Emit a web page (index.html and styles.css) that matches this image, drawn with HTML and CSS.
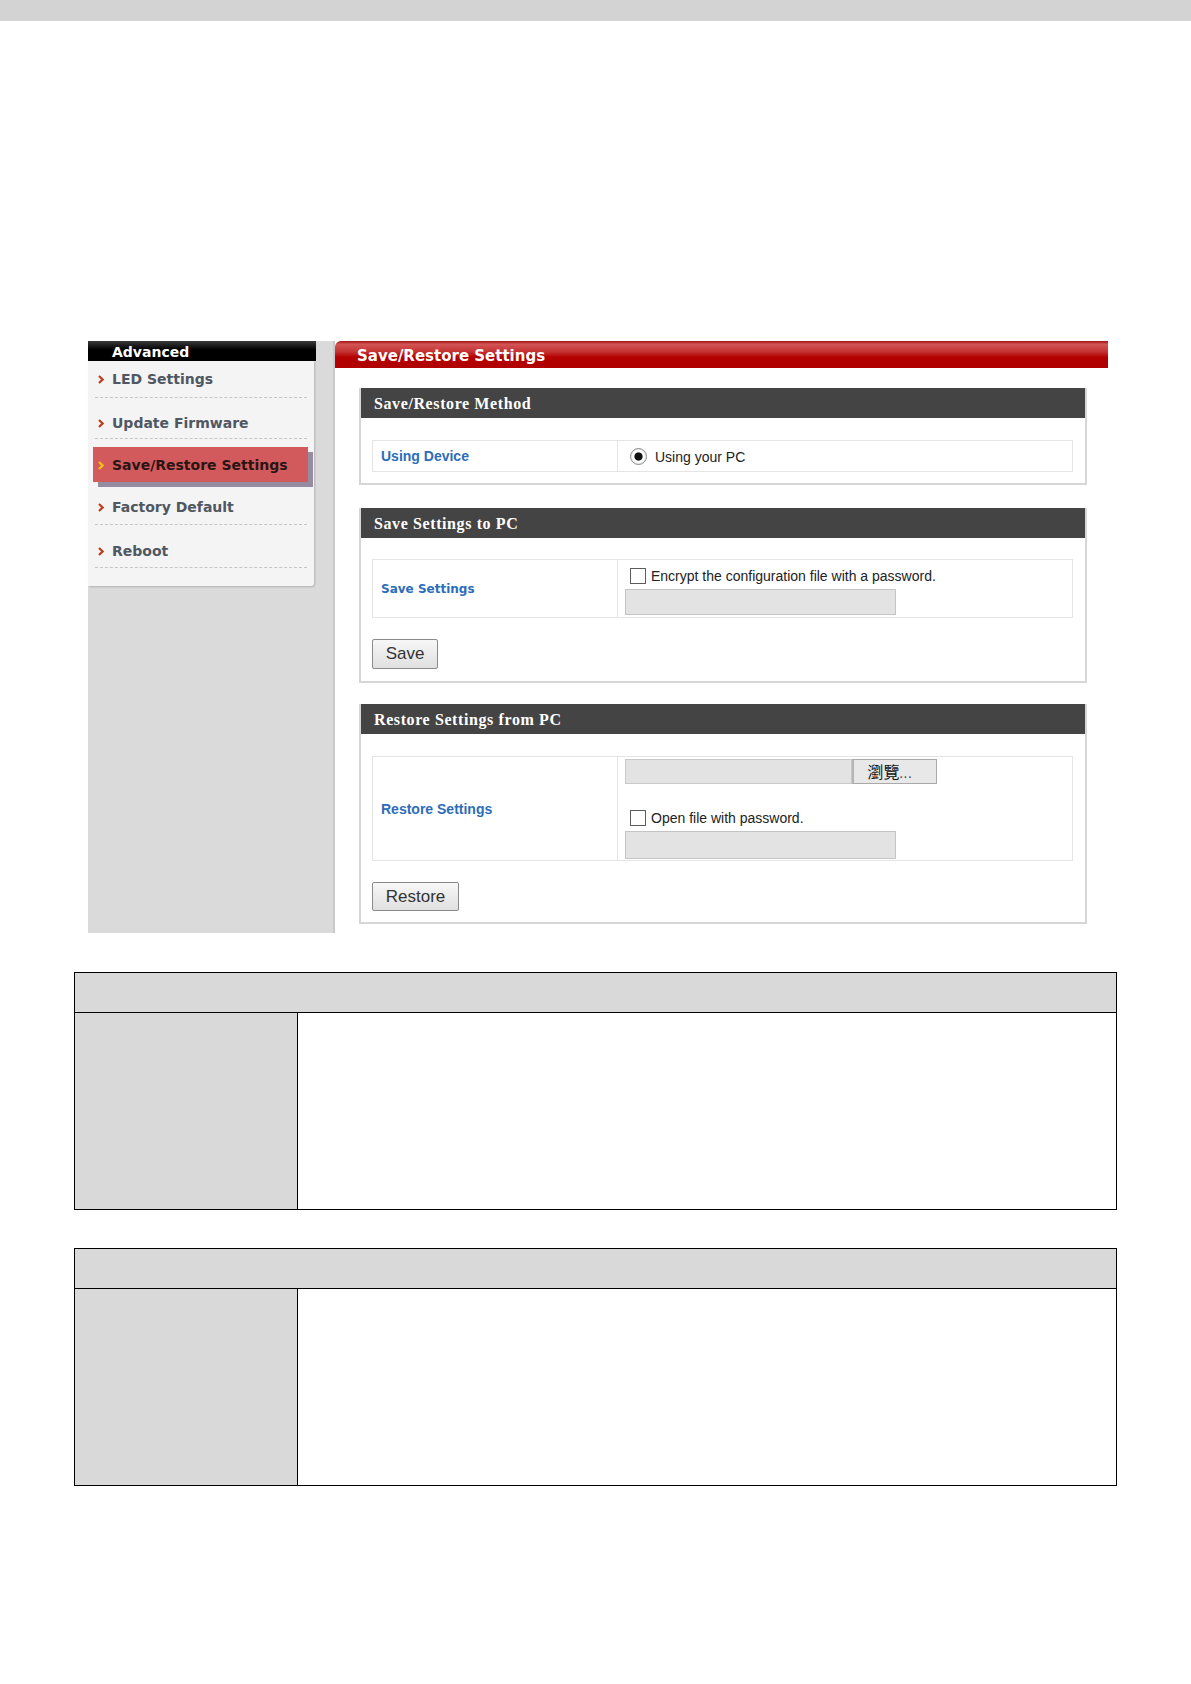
FILE: index.html
```html
<!DOCTYPE html>
<html lang="en">
  <head>
    <meta charset="UTF-8" />
    <meta name="viewport" content="width=device-width, initial-scale=1.0" />
    <link rel="stylesheet" href="styles.css">
    <title>Save/Restore Settings</title>
  </head>
  <body>
    <div class="topbar"></div>

    <div class="shot">
      <aside class="side">
        <div class="side-head">Advanced</div>
        <ul class="menu">
          <li class="item first"><svg class="arrow" viewBox="0 0 6 9"><path d="M1 1 L4.6 4.5 L1 8" /></svg>LED Settings</li>
          <li class="item second"><svg class="arrow" viewBox="0 0 6 9"><path d="M1 1 L4.6 4.5 L1 8" /></svg>Update Firmware</li>
          <li class="item active"><svg class="arrow" viewBox="0 0 6 9"><path d="M1 1 L4.6 4.5 L1 8" /></svg>Save/Restore Settings</li>
          <li class="item fourth"><svg class="arrow" viewBox="0 0 6 9"><path d="M1 1 L4.6 4.5 L1 8" /></svg>Factory Default</li>
          <li class="item last"><svg class="arrow" viewBox="0 0 6 9"><path d="M1 1 L4.6 4.5 L1 8" /></svg>Reboot</li>
        </ul>
      </aside>

      <main class="main">
        <h1 class="title">Save/Restore Settings</h1>

        <section class="box box-method">
          <h2 class="box-head">Save/Restore Method</h2>
          <table class="form">
            <tr class="row-method">
              <td class="label">Using Device</td>
              <td class="value">
                <label class="opt"><input type="radio" name="method" checked /> Using your PC</label>
              </td>
            </tr>
          </table>
        </section>

        <section class="box box-save">
          <h2 class="box-head">Save Settings to PC</h2>
          <table class="form">
            <tr class="row-save">
              <td class="label label-verdana">Save Settings</td>
              <td class="value">
                <label class="opt"><input type="checkbox" /> Encrypt the configuration file with a password.</label>
                <input class="field" type="password" title="Password" />
              </td>
            </tr>
          </table>
          <button class="btn btn-save">Save</button>
        </section>

        <section class="box box-restore">
          <h2 class="box-head">Restore Settings from PC</h2>
          <table class="form">
            <tr class="row-restore">
              <td class="label">Restore Settings</td>
              <td class="value">
                <div class="file">
                  <input class="file-name" type="text" title="File" readonly />
                  <button class="browse">瀏覽<span class="dots">...</span></button>
                </div>
                <label class="opt opt-open"><input type="checkbox" /> Open file with password.</label>
                <input class="field field-open" type="password" title="Password" />
              </td>
            </tr>
          </table>
          <button class="btn btn-restore">Restore</button>
        </section>
      </main>
    </div>

    <table class="doc doc-first">
      <tr><th colspan="2"></th></tr>
      <tr><td class="doc-key"></td><td class="doc-val"></td></tr>
    </table>

    <table class="doc doc-second">
      <tr><th colspan="2"></th></tr>
      <tr><td class="doc-key"></td><td class="doc-val"></td></tr>
    </table>
  </body>
</html>
```

FILE: styles.css
```css
* {
  margin: 0;
  padding: 0;
  box-sizing: border-box;
}

body {
  background: #fff;
  font-family: "Liberation Sans", Arial, sans-serif;
  color: #222;
}

.topbar {
  height: 21px;
  background: #d3d3d3;
}

/* SCREENSHOT */
.shot {
  display: flex;
  width: 1020px;
  margin: 320px 0 0 88px;
}

.side {
  width: 247px;
  background: #dadada;
  border-right: 2px solid #c9c9c9;
}

.side-head {
  width: 228px;
  height: 20px;
  padding-left: 24px;
  background: linear-gradient(#3a3a3a, #000 45%, #000);
  color: #fff;
  font: bold 14px/22px "DejaVu Sans", Verdana, sans-serif;
}

.menu {
  list-style: none;
  width: 226px;
  padding: 0 7px 18px;
  background: #f4f4f4;
  border-bottom-right-radius: 3px;
  box-shadow: 1px 1px 2px rgba(0, 0, 0, 0.18);
}

.item {
  position: relative;
  padding-left: 17px;
  color: #4f5762;
  font: bold 14px/18px "DejaVu Sans", Verdana, sans-serif;
  border-bottom: 1px dashed #c6c6c6;
}

.arrow {
  position: absolute;
  left: 3px;
  width: 6px;
  height: 9px;
  fill: none;
  stroke: #c23d1c;
  stroke-width: 2.2;
}

.first { padding-top: 9px; padding-bottom: 9px; }
.second { padding-top: 16px; padding-bottom: 6px; }
.fourth { padding-top: 16px; padding-bottom: 8px; }
.last { padding-top: 17px; padding-bottom: 7px; }

.active {
  margin: 8px -1px 0 -2px;
  height: 35px;
  padding-top: 9px;
  padding-left: 19px;
  background: #d35a5c;
  color: #2a1414;
  border-bottom: none;
  box-shadow: 5px 5px 0 #958ca2;
}

.active .arrow {
  left: 5px;
  stroke: #f4c20d;
}

.active .arrow,
.first .arrow { top: 14px; }
.second .arrow,
.fourth .arrow { top: 21px; }
.last .arrow { top: 22px; }

.main {
  width: 773px;
  padding-bottom: 9px;
}

.title {
  height: 27px;
  padding-left: 22px;
  border-top-left-radius: 6px;
  background: linear-gradient(#a31010, #d35555 12%, #c43232 40%, #b40000 60%, #b00000);
  color: #fff;
  font: bold 15px/30px "DejaVu Sans", Verdana, sans-serif;
}

.box {
  width: 728px;
  margin-left: 24px;
  border: 2px solid #d6d6d6;
  border-top: none;
  padding: 0 12px 11px 11px;
}

.box-method { margin-top: 20px; }
.box-save { margin-top: 23px; padding-bottom: 12px; }
.box-restore { margin-top: 21px; }

.box-head {
  height: 30px;
  margin: 0 -12px 22px -11px;
  padding-left: 13px;
  background: #444;
  color: #fff;
  font: bold 16px/31px "Liberation Serif", "Times New Roman", serif;
  letter-spacing: 0.6px;
}

.box-save .box-head { margin-bottom: 21px; }

.form {
  width: 701px;
  border-collapse: collapse;
  border: 1px solid #e4e4e4;
}

.label {
  width: 245px;
  padding-left: 8px;
  border-right: 1px solid #e4e4e4;
  color: #2c6db9;
  font-weight: bold;
  font-size: 14px;
}

.label-verdana {
  font: bold 12px "DejaVu Sans", Verdana, sans-serif;
  padding-left: 8px;
}

.value {
  padding-left: 7px;
  font-size: 14px;
  color: #222;
}

.row-method { height: 31px; }
.row-save { height: 58px; }
.row-restore { height: 104px; }

.row-save .value { padding-top: 6px; padding-bottom: 2px; }
.row-restore .value { padding-top: 1px; padding-bottom: 1px; }

.opt {
  display: flex;
  align-items: center;
  gap: 5px;
  margin-left: 5px;
  height: 18px;
}

.row-method .opt { gap: 8px; margin-left: 5px; margin-top: 1px; }

.opt input {
  appearance: none;
  width: 16px;
  height: 16px;
  margin: 0;
  border: 1px solid #5c5c5c;
  background: #fff;
  flex-shrink: 0;
}

.opt input[type="radio"] {
  width: 17px;
  height: 17px;
  border-radius: 50%;
  border-color: #8a8a8a;
  background: radial-gradient(circle, #111 0 3.6px, #fff 4.6px);
  box-shadow: inset 0 0 0 1px #e8e8e8;
}

.field {
  display: block;
  width: 271px;
  height: 26px;
  margin-top: 4px;
  background: #e3e3e3;
  border: 1px solid #c4c4c4;
}

.file {
  display: flex;
  height: 25px;
}

.file-name {
  width: 227px;
  height: 25px;
  background: #e3e3e3;
  border: 1px solid #c9c9c9;
}

.browse {
  width: 85px;
  height: 25px;
  padding-right: 10px;
  background: #e8e8e8;
  border: 1px solid #a9a9a9;
  border-left: 2px solid #b5b5b5;
  color: #111;
  font: 16px/23px "Noto Sans CJK TC", "Liberation Sans", sans-serif;
}

.dots {
  font-size: 12px;
  letter-spacing: 1px;
  color: #444;
}

.opt-open { margin-top: 25px; }

.field-open {
  height: 28px;
  margin-top: 4px;
}

.btn {
  display: block;
  height: 30px;
  margin-top: 21px;
  border: 1px solid #8a8a8a;
  border-radius: 2px;
  background: linear-gradient(#f7f7f7, #e0e0e0);
  color: #333;
  font: 17px "Liberation Sans", Arial, sans-serif;
}

.btn-save { width: 66px; }
.btn-restore { width: 87px; height: 29px; margin-top: 21px; }

/* DOCUMENT TABLES */
.doc {
  width: 1043px;
  margin-left: 74px;
  border-collapse: collapse;
  border: 1px solid #000;
}

.doc th,
.doc td {
  border: 1px solid #000;
}

.doc th {
  height: 40px;
  background: #d9d9d9;
}

.doc-key {
  width: 223px;
  height: 197px;
  background: #d9d9d9;
}

.doc-first { margin-top: 39px; }
.doc-second { margin-top: 38px; }
```
